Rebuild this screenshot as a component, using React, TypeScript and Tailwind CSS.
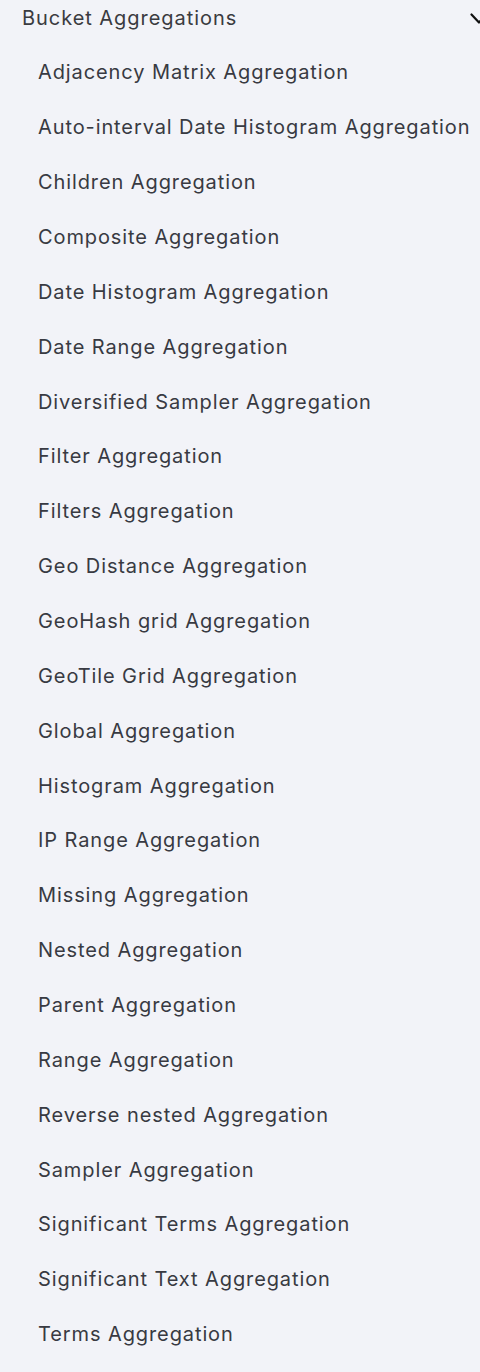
const items = [
  "Adjacency Matrix Aggregation",
  "Auto-interval Date Histogram Aggregation",
  "Children Aggregation",
  "Composite Aggregation",
  "Date Histogram Aggregation",
  "Date Range Aggregation",
  "Diversified Sampler Aggregation",
  "Filter Aggregation",
  "Filters Aggregation",
  "Geo Distance Aggregation",
  "GeoHash grid Aggregation",
  "GeoTile Grid Aggregation",
  "Global Aggregation",
  "Histogram Aggregation",
  "IP Range Aggregation",
  "Missing Aggregation",
  "Nested Aggregation",
  "Parent Aggregation",
  "Range Aggregation",
  "Reverse nested Aggregation",
  "Sampler Aggregation",
  "Significant Terms Aggregation",
  "Significant Text Aggregation",
  "Terms Aggregation",
]

export default function App() {
  return (
    <div className="min-h-[1372px] w-[480px] overflow-hidden bg-[#f2f3f8] font-['Inter',sans-serif] text-[#383a42]">
      {/* section header */}
      <div className="flex h-[36px] w-[490px] items-center justify-between pl-[22px]">
        <span className="text-[20px] leading-none tracking-[0.95px] text-[#3a3b40]">Bucket Aggregations</span>
        <svg width="20" height="12" viewBox="0 0 20 12" fill="none" stroke="#111" strokeWidth="2.2" strokeLinecap="round" strokeLinejoin="round" className="mt-[2px]">
          <polyline points="1.5,1.5 9,9.5 16.5,1.5" />
        </svg>
      </div>

      <ul className="pt-[9px]">
        {items.map((item) => (
          <li key={item} className="flex h-[54.86px] items-center pl-[38px]">
            <a href="#" className="whitespace-nowrap text-[20px] leading-none tracking-[0.9px]">
              {item}
            </a>
          </li>
        ))}
      </ul>
    </div>
  )
}
